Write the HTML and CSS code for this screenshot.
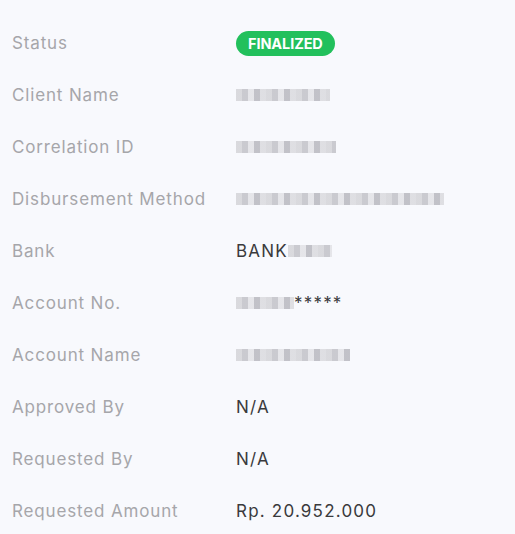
FILE: index.html
```html
<!DOCTYPE html>
<html>
<head>
<meta charset="utf-8">
<link rel="stylesheet" href="styles.css">
</head>
<body>
<div class="details">
  <div class="row"><div class="label">Status</div><div class="value"><span class="badge">FINALIZED</span></div></div>
  <div class="row"><div class="label">Client Name</div><div class="value"><span class="blur w94"></span></div></div>
  <div class="row"><div class="label">Correlation ID</div><div class="value"><span class="blur w100"></span></div></div>
  <div class="row"><div class="label">Disbursement Method</div><div class="value"><span class="blur w208"></span></div></div>
  <div class="row"><div class="label">Bank</div><div class="value">BANK<span class="blur w44"></span></div></div>
  <div class="row"><div class="label">Account No.</div><div class="value"><span class="blur w58"></span>*****</div></div>
  <div class="row"><div class="label">Account Name</div><div class="value"><span class="blur w114"></span></div></div>
  <div class="row"><div class="label">Approved By</div><div class="value">N/A</div></div>
  <div class="row"><div class="label">Requested By</div><div class="value">N/A</div></div>
  <div class="row"><div class="label">Requested Amount</div><div class="value">Rp. 20.952.000</div></div>
</div>
</body>
</html>
```
FILE: styles.css
```css
html, body {
  margin: 0;
  background: #f8f9fd;
}
body {
  font-family: Inter, "Noto Sans", sans-serif;
  font-size: 17px;
  padding: 17px 0 0 12px;
}
.details {
  display: flex;
  flex-direction: column;
}
.row {
  display: grid;
  grid-template-columns: 224px 1fr;
  height: 52px;
  align-items: center;
}
.label {
  color: #a6a6aa;
  letter-spacing: 0.85px;
}
.value {
  color: #3a3a3c;
  letter-spacing: 1.2px;
  display: flex;
  align-items: center;
}
.badge {
  display: inline-block;
  background: #22c05c;
  color: #fff;
  font-weight: 700;
  font-size: 14.5px;
  letter-spacing: -0.1px;
  line-height: 25px;
  height: 25px;
  padding: 0 12px;
  border-radius: 13px;
}
.blur {
  display: inline-block;
  height: 12px;
  background: repeating-linear-gradient(90deg, #d4d4d8 0 6px, #c2c2c8 6px 12px, #e2e2e6 12px 18px, #b8b8bf 18px 24px, #dadade 24px 30px);
  opacity: 0.85;
}
.w94 { width: 94px; }
.w100 { width: 100px; }
.w208 { width: 208px; }
.w44 { width: 44px; }
.w58 { width: 58px; }
.w114 { width: 114px; }
```
